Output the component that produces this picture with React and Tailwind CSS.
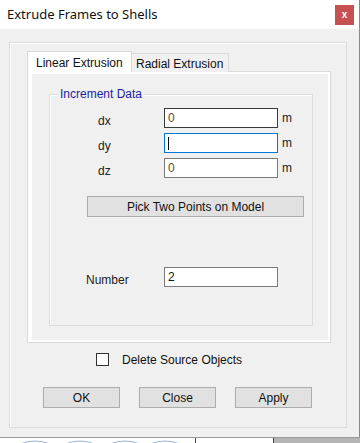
export default function App() {
  const ui = { fontFamily: '"Liberation Sans", Arial, sans-serif' };

  function Field({ value, border, caret }) {
    return (
      <div className={`w-[114px] h-[20px] bg-white border ${border} flex items-center pl-[3px] text-[12px] text-[#6b4a1f]`}>
        {caret ? <span className="w-px h-[13px] bg-black" /> : value}
      </div>
    );
  }

  function Row({ label, value, border, caret }) {
    return (
      <div className="flex items-end h-[20px] pl-[48px]">
        <span className="w-[66px] leading-[14px] text-[12px] text-[#222]">{label}</span>
        <Field value={value} border={border} caret={caret} />
        <span className="ml-[4px] self-center text-[12px] leading-[14px] text-[#222]">m</span>
      </div>
    );
  }

  function Btn({ children, className = '' }) {
    return (
      <div className={`h-[21px] bg-[#e1e1e1] border border-[#adadad] flex items-center justify-center text-[12px] text-[#111] ${className}`}>
        {children}
      </div>
    );
  }

  return (
    <div className="w-[360px] h-[443px] overflow-hidden bg-white" style={ui}>
      {/* Title bar */}
      <div className="h-[29px] bg-white flex items-center justify-between border-r border-[#8a8a8a]">
        <span className="pl-[7px] text-[13px] text-[#111]" style={{ fontFamily: '"Noto Sans", sans-serif' }}>
          Extrude Frames to Shells
        </span>
        <div className="w-[19px] h-[20px] mr-[5px] bg-[#c75050] flex items-center justify-center text-white text-[10px] font-bold leading-none">
          x
        </div>
      </div>

      {/* Body */}
      <div className="h-[408px] bg-[#f0f0f0] border-r border-[#8a8a8a] pt-[13px] pl-[9px]">
        <div className="w-[338px] h-[386px] border border-[#dcdcdc] shadow-[inset_1px_1px_0_#ffffff] pl-[17px] pt-[8px]">
          {/* Tabs */}
          <div className="flex items-end h-[21px]">
            <div className="w-[105px] h-[21px] bg-white border border-b-0 border-[#d9d9d9] pl-[8px] pt-[2px] text-[12px] text-[#111] relative z-10">
              Linear Extrusion
            </div>
            <div className="w-[97px] h-[19px] bg-[#f0f0f0] border border-l-0 border-b-0 border-[#d9d9d9] pl-[4px] pt-[1px] text-[12px] text-[#111]">
              Radial Extrusion
            </div>
          </div>

          {/* Tab page */}
          <div className="w-[304px] h-[272px] -mt-px border border-[#d9d9d9] bg-white pl-[4px] pr-[2px] pt-[2px] pb-[2px]">
            <div className="h-full bg-[#f0f0f0] pt-[20px] pl-[17px]">
              <div className="relative w-[264px] h-[232px] border border-[#dcdcdc] shadow-[inset_1px_1px_0_#ffffff]">
                <span className="absolute -top-[8px] left-[8px] px-[2px] bg-[#f0f0f0] text-[12px] text-[#1e1ea0] leading-[14px]">
                  Increment Data
                </span>

                <div className="flex flex-col gap-[5px] pt-[13px]">
                  <Row label="dx" value="0" border="border-[#3a3a3a]" />
                  <Row label="dy" border="border-[#0078d7]" caret />
                  <Row label="dz" value="0" border="border-[#7a7a7a]" />
                </div>

                <Btn className="w-[217px] ml-[37px] mt-[18px]">Pick Two Points on Model</Btn>

                <div className="flex items-end h-[20px] pl-[36px] mt-[50px]">
                  <span className="w-[78px] leading-[14px] text-[12px] text-[#222]">Number</span>
                  <div className="w-[114px] h-[20px] bg-white border border-[#7a7a7a] flex items-center pl-[3px] text-[12px] text-[#111]">
                    2
                  </div>
                </div>
              </div>
            </div>
          </div>

          {/* Checkbox */}
          <div className="flex items-center h-[13px] mt-[10px] ml-[69px]">
            <div className="w-[13px] h-[13px] bg-white border border-[#333]" />
            <span className="ml-[13px] text-[12px] leading-[14px] text-[#111]">Delete Source Objects</span>
          </div>

          {/* Buttons */}
          <div className="flex gap-[19px] mt-[21px] ml-[16px]">
            <Btn className="w-[77px]">OK</Btn>
            <Btn className="w-[77px]">Close</Btn>
            <Btn className="w-[77px]">Apply</Btn>
          </div>
        </div>
      </div>

      {/* Behind the dialog */}
      <div className="h-[6px] border-t border-[#9a9a9a] flex">
        <div className="w-[195px] h-full bg-white">
          <svg width="195" height="6" viewBox="0 0 195 6">
            <path d="M20 6 Q35 0 50 6 M65 6 Q80 0 95 6 M110 6 Q125 0 140 6 M150 6 Q165 0 180 6" stroke="#9bb3dd" strokeWidth="1" fill="none" />
          </svg>
        </div>
        <div className="w-[78px] h-full bg-white border-l border-[#444]" />
        <div className="flex-1 h-full bg-[#b5b5b5] border-l border-[#444]" />
      </div>
    </div>
  );
}
